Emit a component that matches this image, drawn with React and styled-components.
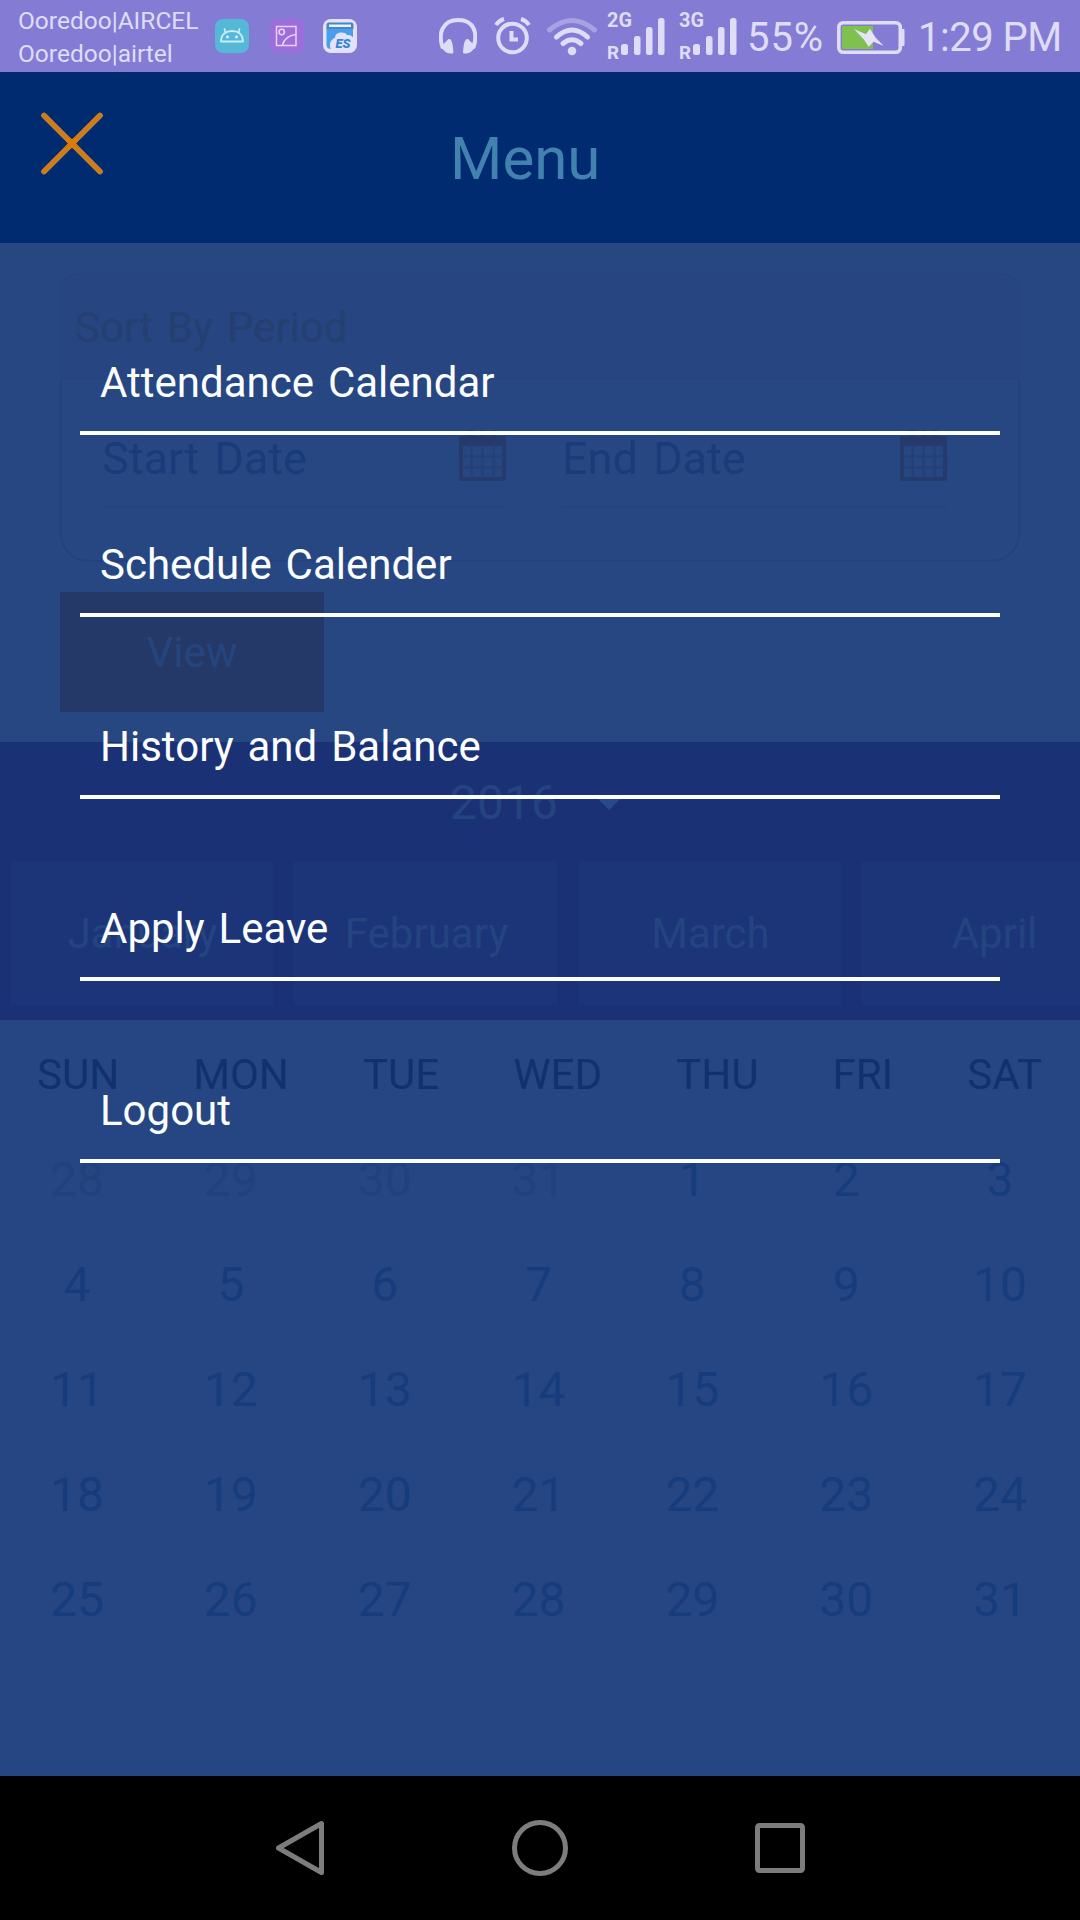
import React from "react";
import styled, { createGlobalStyle } from "styled-components";

const Global = createGlobalStyle`
  * { box-sizing: border-box; }
  body { margin: 0; background: #000; font-family: Roboto, "Noto Sans", sans-serif; }
  svg { display: block; flex: none; }
`;

const Screen = styled.div`
  width: 1080px;
  height: 1920px;
  display: flex;
  flex-direction: column;
  overflow: hidden;
  position: relative;
`;

const StatusBar = styled.header`
  height: 72px;
  flex: none;
  background: #847cd4;
  color: #dfdcf8;
  display: flex;
  align-items: flex-start;
  padding-left: 18px;
`;
const Carriers = styled.div`
  width: 197px;
  flex: none;
  padding-top: 4px;
  font-size: 24.5px;
  line-height: 33px;
  white-space: nowrap;
`;
const StatusIcon = styled.svg`
  height: 72px;
  width: ${(p) => p.$w}px;
  margin-right: ${(p) => p.$gap || 0}px;
`;
const StatusText = styled.span`
  font-size: 40px;
  line-height: 76px;
  width: ${(p) => p.$w}px;
  letter-spacing: ${(p) => p.$spacing || 0}px;
  flex: none;
  white-space: nowrap;
`;

const TitleBar = styled.div`
  height: 171px;
  flex: none;
  background: #002b71;
  display: flex;
  padding: 37px 0 0 38px;
`;
const CloseButton = styled.button`
  border: 0;
  padding: 0;
  background: none;
  width: 68px;
  height: 68px;
`;
const Title = styled.h1`
  margin: 15px 0 0 344px;
  font-size: 60px;
  line-height: 70px;
  font-weight: 400;
  color: #4183ae;
`;

const FilterArea = styled.section`
  height: 499px;
  flex: none;
  background: #274783;
  padding: 30px 60px;
  display: flex;
  flex-direction: column;
  align-items: flex-start;
`;
const Card = styled.div`
  width: 960px;
  height: 289px;
  display: flex;
  flex-direction: column;
`;
const CardHeader = styled.div`
  height: 107px;
  flex: none;
  border: 2px solid #254480;
  border-radius: 18px 18px 0 0;
  background: #264581;
  padding: 28px 0 0 13px;
  font-size: 42px;
  line-height: 50px;
  color: #253f70;
  word-spacing: 3.6px;
`;
const Fields = styled.div`
  flex: 1;
  border: 2px solid #22417e;
  border-top: 0;
  border-radius: 0 0 28px 28px;
  display: flex;
  gap: 56px;
  padding: 43px 0 0 40px;
`;
const Field = styled.div`
  width: ${(p) => p.$w}px;
  height: 85px;
  border-bottom: 2px solid #254380;
  display: flex;
  justify-content: space-between;
  font-size: 45px;
  line-height: 72px;
  word-spacing: 4px;
  color: #1a3b7a;
`;
const ViewButton = styled.button`
  margin-top: 30px;
  width: 264px;
  height: 120px;
  border: 0;
  padding: 1px 0 0;
  background: #243968;
  color: #25457f;
  font: 400 42px/50px Roboto, sans-serif;
`;

const MonthBand = styled.section`
  height: 278px;
  flex: none;
  background: #1a3275;
  overflow: hidden;
`;
const YearPicker = styled.div`
  height: 119px;
  display: flex;
  align-items: flex-start;
  padding: 33px 0 0 450px;
  gap: 38px;
  font-size: 48px;
  line-height: 56px;
  color: #244480;
`;
const Months = styled.div`
  display: flex;
  gap: 21px;
  padding-left: 10px;
`;
const Month = styled.div`
  width: 263px;
  height: 144px;
  flex: none;
  background: #1c3578;
  color: #244480;
  font-size: 42px;
  line-height: 145px;
  padding-left: 2px;
  text-align: center;
`;

const Calendar = styled.section`
  flex: 1;
  background: #254682;
`;
const Weekdays = styled.div`
  display: flex;
  justify-content: space-between;
  padding: 30px 38px 0 37px;
  font-size: 42px;
  line-height: 50px;
  color: #10316e;
`;
const Days = styled.div`
  display: grid;
  width: 1077px;
  grid-template-columns: repeat(7, 1fr);
  grid-auto-rows: 105px;
  padding-top: 28px;
`;
const Day = styled.span`
  text-align: center;
  font-size: 48px;
  line-height: 104px;
  color: ${(p) => (p.$faded ? "#21407c" : "#173c7d")};
`;

const MenuOverlay = styled.nav`
  position: absolute;
  top: 253px;
  left: 80px;
  width: 920px;
  display: flex;
  flex-direction: column;
`;
const MenuItem = styled.a`
  height: 182px;
  border-bottom: 4px solid #fbfffe;
  padding: 0 20px 23px;
  display: flex;
  align-items: flex-end;
  font-size: 42px;
  line-height: 50px;
  word-spacing: 3.5px;
  color: #fbfdff;
`;

const NavBar = styled.footer`
  height: 144px;
  flex: none;
  background: #000;
  display: flex;
  justify-content: center;
  align-items: center;
  gap: 180px;
`;

const INK = "#dfdcf8";

const Signal = ({ label, gap }) => (
  <StatusIcon $w={60} $gap={gap} viewBox="0 0 60 72" fill={INK}>
    <text x="0" y="27" fontSize="20.5" fontWeight="700" textLength="25" lengthAdjust="spacingAndGlyphs">{label}</text>
    <text x="0" y="58.500" fontSize="19" fontWeight="700" textLength="12" lengthAdjust="spacingAndGlyphs">R</text>
    <rect x="14" y="44" width="7" height="11" rx="2.500" />
    <rect x="27" y="36" width="6.500" height="19" rx="2.500" />
    <rect x="39" y="27" width="6.500" height="28" rx="2.500" />
    <rect x="51" y="18" width="6.500" height="37" rx="2.500" />
  </StatusIcon>
);

const CalendarIcon = () => (
  <svg width="48" height="60" viewBox="0 0 48 60" fill="none" stroke="#253b6c">
    <path d="M3 16V56H46V16" strokeWidth="4" strokeLinejoin="round" />
    <path d="M1 15Q1 13 3 13H46Q48 13 48 15V23H1Z" fill="#253b6c" stroke="none" />
    <path d="M13 7V15M24.500 7V15M36 7V15" strokeWidth="5" />
    <path d="M3 33.500H46M3 44.500H46M13.500 22V55M24.500 22V55M35.500 22V55" strokeWidth="2.200" stroke="#263f75" />
  </svg>
);

const MENU = ["Attendance Calendar", "Schedule Calender", "History and Balance", "Apply Leave", "Logout"];
const MONTHS = ["January", "February", "March", "April"];
const WEEKDAYS = ["SUN", "MON", "TUE", "WED", "THU", "FRI", "SAT"];
const DAYS = [28, 29, 30, 31, ...Array.from({ length: 31 }, (_, i) => i + 1)];

export default function App() {
  return (
    <Screen>
      <Global />
      <StatusBar>
        <Carriers>
          <div>Ooredoo|AIRCEL</div>
          <div>Ooredoo|airtel</div>
        </Carriers>
        <StatusIcon $w={34} $gap={21} viewBox="0 0 34 72">
          <rect y="19" width="34" height="34" rx="8" fill="#54b8d6" />
          <g fill="none" stroke="#c9ecf8" strokeWidth="1.800" strokeLinejoin="round" strokeLinecap="round">
            <path d="M6 41.500C6 34 11 31 17 31S28 34 28 41.500Z" />
            <path d="M10.500 32.500L9.500 29M23.500 32.500L24.500 29" />
          </g>
          <circle cx="12.500" cy="37" r="1.400" fill="#e2f6fc" />
          <circle cx="21.500" cy="37" r="1.400" fill="#e2f6fc" />
        </StatusIcon>
        <StatusIcon $w={34} $gap={19} viewBox="0 0 34 72">
          <rect y="19" width="34" height="34" rx="7" fill="#9b6edb" />
          <g fill="none" stroke="#efd0fa" strokeWidth="1.500">
            <rect x="6.500" y="26.500" width="19.500" height="19" />
            <circle cx="11.700" cy="32" r="2.700" />
            <path d="M12.500 45C14 39 18 35.500 26 34.500" />
          </g>
        </StatusIcon>
        <StatusIcon $w={34} $gap={82} viewBox="0 0 34 72">
          <rect y="19" width="34" height="34" rx="8" fill="#e4e2f8" />
          <path d="M3.500 28H30V49H8Q3.500 49 3.500 45Z" fill="#4a9fea" />
          <path d="M3.500 24L5 22.500H29L30.500 24V29H3.500Z" fill="#4687c6" />
          <path d="M6 24.500H28V27H6Z" fill="#eef0fa" />
          <path d="M8 50C5.500 44 8 39 12 38C12 32 21 31 24 35C30 34 33 40 31 50Z" fill="#e4e2f8" />
          <text x="12.500" y="48" fontSize="12" fontWeight="900" fontStyle="italic" fill="#3386d6" textLength="15" lengthAdjust="spacingAndGlyphs">ES</text>
        </StatusIcon>
        <StatusIcon $w={38} $gap={17} viewBox="0 0 38 72">
          <path d="M3.500 47C-1 34 3 20 19.300 20S39 34 34.500 47" fill="none" stroke={INK} strokeWidth="4" strokeLinecap="round" />
          <path d="M2.500 46L9.500 39C13 38 14 45 14.500 53C9 55 4 51 2.500 46ZM36 46L29 39C25.500 38 24.500 45 24 53C29.500 55 34.500 51 36 46Z" fill={INK} />
        </StatusIcon>
        <StatusIcon $w={37} $gap={15} viewBox="0 0 37 72" fill="none" stroke={INK} strokeWidth="4" strokeLinecap="round">
          <circle cx="18.500" cy="38" r="14.300" />
          <path d="M2 25Q5 20.500 10 19M35 25Q32 20.500 27 19" strokeLinecap="butt" />
          <path d="M17.500 31V39.500H24" strokeLinecap="butt" />
        </StatusIcon>
        <StatusIcon $w={52} $gap={9} viewBox="0 0 52 72" fill="none" stroke={INK} strokeWidth="5" strokeLinecap="round">
          <path d="M3.500 30Q26 11 48.500 30" opacity="0.400" />
          <path d="M10.500 37Q26 23 41.500 37M17 43.500Q26 36 35 43.500" />
          <circle cx="26" cy="51" r="4.300" fill={INK} stroke="none" />
        </StatusIcon>
        <Signal label="2G" gap={12} />
        <Signal label="3G" gap={8} />
        <StatusText $w={90} $spacing={0.9}>55%</StatusText>
        <StatusIcon $w={68} $gap={13} viewBox="0 0 68 72">
          <rect x="1.800" y="22.800" width="61.500" height="29.500" rx="4.500" fill="none" stroke={INK} strokeWidth="3.600" />
          <rect x="64" y="29" width="3.500" height="17" rx="1" fill={INK} />
          <rect x="5" y="26" width="31" height="23" fill="#7fc04f" />
          <path d="M17 29L29 34.300L33 28.700L38.500 37.500L46.500 45.800L36.500 41.800L31.700 46.700L26.500 39Z" fill="#e6e4fa" />
        </StatusIcon>
        <StatusText $w={150} $spacing={-0.5}>1:29 PM</StatusText>
      </StatusBar>

      <TitleBar>
        <CloseButton aria-label="Close">
          <svg width="68" height="68" viewBox="0 0 68 68" stroke="#cd7c1e" strokeWidth="5.800" strokeLinecap="round">
            <path d="M6 6.500L62 62.500M62 6.500L6 62.500" />
            <path d="M31 31.500L37 37.500M37 31.500L31 37.500" stroke="#dc7c08" />
          </svg>
        </CloseButton>
        <Title>Menu</Title>
      </TitleBar>

      <FilterArea>
        <Card>
          <CardHeader>Sort By Period</CardHeader>
          <Fields>
            <Field $w={404}>Start Date<CalendarIcon /></Field>
            <Field $w={385}>End Date<CalendarIcon /></Field>
          </Fields>
        </Card>
        <ViewButton>View</ViewButton>
      </FilterArea>

      <MonthBand>
        <YearPicker>
          2016
          <svg width="26" height="56" viewBox="0 0 26 56"><path d="M1 23H25L13 35Z" fill="#284a87" /></svg>
        </YearPicker>
        <Months>
          {MONTHS.map((m) => <Month key={m}>{m}</Month>)}
        </Months>
      </MonthBand>

      <Calendar>
        <Weekdays>
          {WEEKDAYS.map((d) => <span key={d}>{d}</span>)}
        </Weekdays>
        <Days>
          {DAYS.map((d, i) => <Day key={i} $faded={i < 4}>{d}</Day>)}
        </Days>
      </Calendar>

      <MenuOverlay>
        {MENU.map((m) => <MenuItem key={m}>{m}</MenuItem>)}
      </MenuOverlay>

      <NavBar>
        <svg width="60" height="60" viewBox="0 0 60 60" fill="none" stroke="#7d7d7d" strokeWidth="5" strokeLinejoin="round">
          <path d="M8.500 30L51.500 5.500V54.500Z" />
        </svg>
        <svg width="60" height="60" viewBox="0 0 60 60" fill="none" stroke="#7d7d7d" strokeWidth="5">
          <circle cx="30" cy="30" r="25.500" />
        </svg>
        <svg width="60" height="60" viewBox="0 0 60 60" fill="none" stroke="#7d7d7d" strokeWidth="5">
          <rect x="7.500" y="7.500" width="45" height="45" rx="2" />
        </svg>
      </NavBar>
    </Screen>
  );
}
